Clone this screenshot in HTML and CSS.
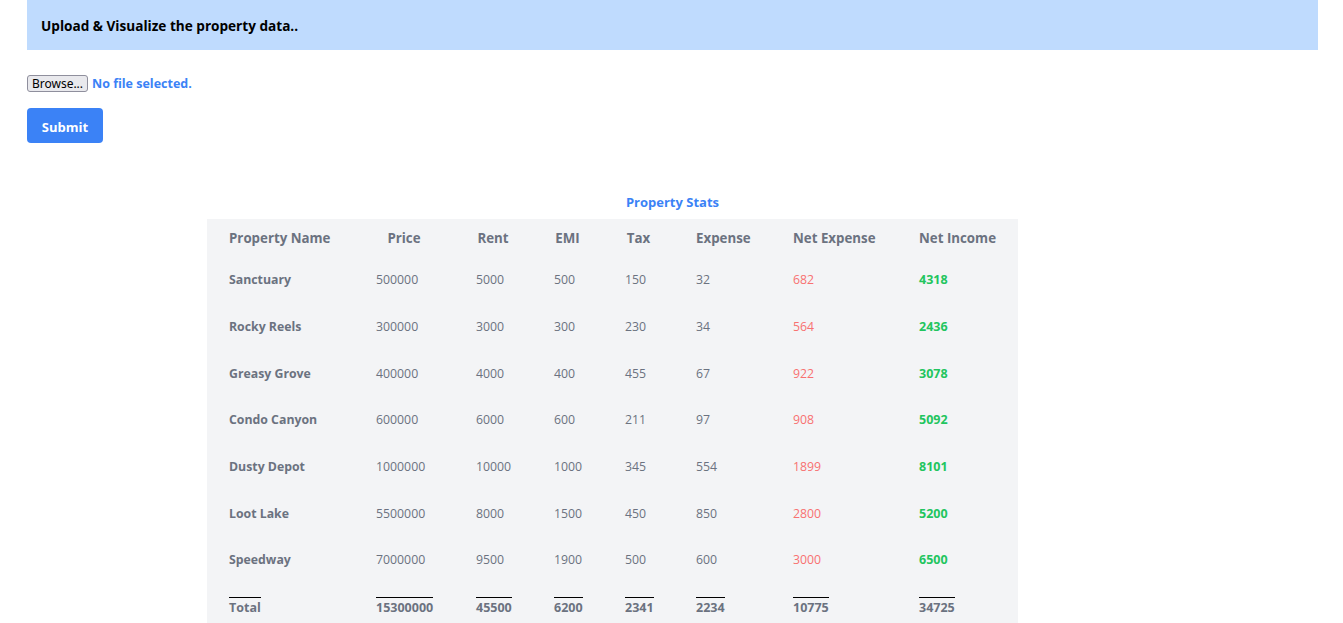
FILE: index.html
```html
<!DOCTYPE html>
<html lang="en">
<head>
<meta charset="utf-8">
<title>Property Stats</title>
<link rel="stylesheet" href="styles.css">
</head>
<body>
<div class="page">
  <header class="banner">Upload &amp; Visualize the property data..</header>

  <form class="upload">
    <label class="file-row">
      <span class="browse">Browse...</span>
      <span class="file-status">No file selected.</span>
    </label>
    <button type="button" class="submit">Submit</button>
  </form>

  <section class="stats">
    <h2 class="stats-title">Property Stats</h2>
    <div class="table-wrap">
      <table class="stats-table">
        <colgroup>
          <col class="c-name"><col class="c-price"><col class="c-rent"><col class="c-emi">
          <col class="c-tax"><col class="c-exp"><col class="c-netexp"><col class="c-netinc">
        </colgroup>
        <thead>
          <tr>
            <th class="left">Property Name</th><th>Price</th><th>Rent</th><th>EMI</th>
            <th>Tax</th><th>Expense</th><th>Net Expense</th><th>Net Income</th>
          </tr>
        </thead>
        <tbody>
          <tr><td class="name">Sanctuary</td><td>500000</td><td>5000</td><td>500</td><td>150</td><td>32</td><td class="neg">682</td><td class="pos">4318</td></tr>
          <tr><td class="name">Rocky Reels</td><td>300000</td><td>3000</td><td>300</td><td>230</td><td>34</td><td class="neg">564</td><td class="pos">2436</td></tr>
          <tr><td class="name">Greasy Grove</td><td>400000</td><td>4000</td><td>400</td><td>455</td><td>67</td><td class="neg">922</td><td class="pos">3078</td></tr>
          <tr><td class="name">Condo Canyon</td><td>600000</td><td>6000</td><td>600</td><td>211</td><td>97</td><td class="neg">908</td><td class="pos">5092</td></tr>
          <tr><td class="name">Dusty Depot</td><td>1000000</td><td>10000</td><td>1000</td><td>345</td><td>554</td><td class="neg">1899</td><td class="pos">8101</td></tr>
          <tr><td class="name">Loot Lake</td><td>5500000</td><td>8000</td><td>1500</td><td>450</td><td>850</td><td class="neg">2800</td><td class="pos">5200</td></tr>
          <tr><td class="name">Speedway</td><td>7000000</td><td>9500</td><td>1900</td><td>500</td><td>600</td><td class="neg">3000</td><td class="pos">6500</td></tr>
        </tbody>
        <tfoot>
          <tr>
            <td><span class="sum">Total</span></td>
            <td><span class="sum">15300000</span></td>
            <td><span class="sum">45500</span></td>
            <td><span class="sum">6200</span></td>
            <td><span class="sum">2341</span></td>
            <td><span class="sum">2234</span></td>
            <td><span class="sum">10775</span></td>
            <td><span class="sum">34725</span></td>
          </tr>
        </tfoot>
      </table>
    </div>
  </section>
</div>
</body>
</html>
```

FILE: styles.css
```css
* { box-sizing: border-box; }

html, body {
  margin: 0;
  padding: 0;
  background: #ffffff;
  font-family: "Open Sans", "Noto Sans", sans-serif;
  color: #000;
}

.page {
  margin: 0 25px 0 27px;
}

.banner {
  height: 50px;
  background: #bfdbfe;
  display: flex;
  align-items: center;
  padding: 1px 14px 0;
  font-size: 13.6px;
  font-weight: 700;
  color: #000;
}

.upload {
  display: flex;
  flex-direction: column;
  align-items: flex-start;
  margin: 25px 0 0;
}

.file-row {
  display: flex;
  align-items: center;
  gap: 4px;
  height: 17px;
}

.browse {
  display: inline-flex;
  align-items: center;
  justify-content: center;
  height: 17px;
  width: 61px;
  background: #e9e9ed;
  border: 1px solid #8f8f9d;
  border-radius: 3px;
  font-family: "Noto Sans", "Open Sans", sans-serif;
  font-size: 12px;
  color: #000;
  line-height: 1;
}

.file-status {
  font-size: 12.5px;
  font-weight: 700;
  color: #3b82f6;
}

.submit {
  margin-top: 16px;
  width: 76px;
  height: 35px;
  border: none;
  border-radius: 4px;
  background: #3b82f6;
  color: #ffffff;
  font-family: "Open Sans", "Noto Sans", sans-serif;
  font-size: 13px;
  font-weight: 700;
  padding: 2px 0 0;
  cursor: pointer;
}

.stats {
  margin-top: 49px;
}

.stats-title {
  margin: 0;
  text-align: center;
  font-size: 13px;
  font-weight: 700;
  line-height: 20px;
  color: #3b82f6;
  padding-left: 0;
}

.table-wrap {
  margin-top: 7px;
  padding-left: 180px;
}

.stats-table {
  table-layout: fixed;
  width: 811px;
  border-collapse: collapse;
  background: #f3f4f6;
  color: #6b7280;
}

.c-name { width: 147px; }
.c-price { width: 100px; }
.c-rent { width: 78px; }
.c-emi { width: 71px; }
.c-tax { width: 71px; }
.c-exp { width: 97px; }
.c-netexp { width: 126px; }
.c-netinc { width: 121px; }

.stats-table th {
  height: 38px;
  padding: 1px 22px 0;
  font-size: 13.3px;
  font-weight: 700;
  line-height: 19px;
  text-align: center;
  white-space: nowrap;
  vertical-align: middle;
}

.stats-table th.left { text-align: left; }

.stats-table td {
  height: 46.7px;
  padding: 0 22px;
  font-size: 12.3px;
  line-height: 18px;
  text-align: left;
  vertical-align: middle;
  white-space: nowrap;
}

.stats-table td.name {
  font-size: 12.3px;
  font-weight: 700;
}

.stats-table td.neg { color: #f87171; }

.stats-table td.pos {
  color: #22c55e;
  font-weight: 700;
  font-size: 12.5px;
}

.stats-table tfoot td {
  font-weight: 700;
  font-size: 12.5px;
}

.sum {
  display: inline-block;
  border-top: 1px solid #000;
  padding-top: 1px;
  line-height: 17px;
}
```
